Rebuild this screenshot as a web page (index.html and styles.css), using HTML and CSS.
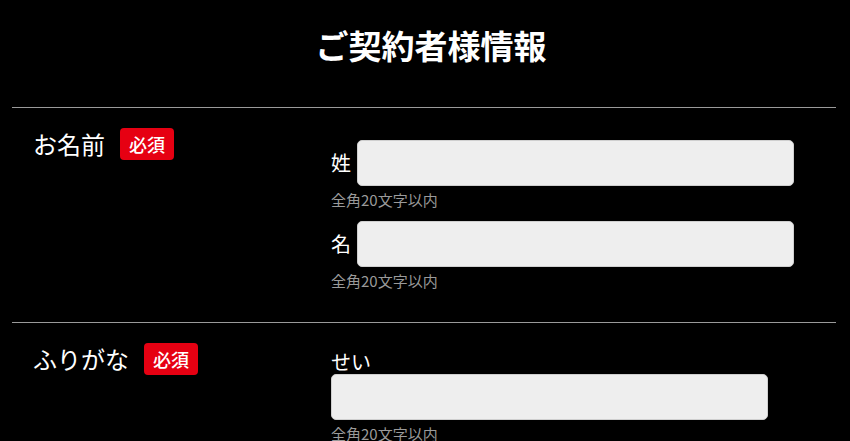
FILE: index.html
```html
<!DOCTYPE html>
<html lang="ja">
<head>
<meta charset="utf-8">
<title>ご契約者様情報</title>
<link rel="stylesheet" href="styles.css">
</head>
<body>
<div class="page">
  <h1 class="title">ご契約者様情報</h1>
  <div class="form-row">
    <div class="row-head">
      <span class="row-label">お名前</span>
      <span class="badge">必須</span>
    </div>
    <div class="row-body">
      <div class="field">
        <div class="field-line">
          <span class="field-label">姓</span>
          <input class="text-input" type="text">
        </div>
        <div class="hint">全角20文字以内</div>
      </div>
      <div class="field">
        <div class="field-line">
          <span class="field-label">名</span>
          <input class="text-input" type="text">
        </div>
        <div class="hint">全角20文字以内</div>
      </div>
    </div>
  </div>
  <div class="form-row">
    <div class="row-head">
      <span class="row-label">ふりがな</span>
      <span class="badge">必須</span>
    </div>
    <div class="row-body stacked">
      <div class="field">
        <div class="field-label top-label">せい</div>
        <input class="text-input" type="text">
        <div class="hint">全角20文字以内</div>
      </div>
    </div>
  </div>
</div>
</body>
</html>
```

FILE: styles.css
```css
* { box-sizing: border-box; }
html, body {
  margin: 0;
  padding: 0;
  background: #000;
  color: #fff;
  font-family: "Noto Sans CJK JP", "Noto Sans", sans-serif;
}
.page {
  margin: 0 14px 0 12px;
}
.title {
  margin: 0 0 43px;
  padding: 26px 0 0 14px;
  font-size: 33px;
  line-height: 38px;
  font-weight: 700;
  text-align: center;
}
.form-row {
  display: flex;
  border-top: 1px solid #9a9a9a;
  padding: 20px 21px 31px;
}
.row-head {
  width: 298px;
  flex: none;
  display: flex;
  align-items: center;
  align-self: flex-start;
  gap: 15px;
}
.row-label {
  font-size: 24px;
  line-height: 32px;
}
.badge {
  display: inline-block;
  background: #e60012;
  color: #fff;
  font-size: 18px;
  font-weight: 500;
  line-height: 32px;
  height: 32px;
  padding: 0 9px;
  border-radius: 4px;
}
.row-body {
  padding-top: 12px;
  display: flex;
  flex-direction: column;
  gap: 11px;
}
.row-body.stacked {
  padding-top: 7px;
}
.field-line {
  display: flex;
  align-items: center;
  gap: 6px;
}
.field-label {
  font-size: 20px;
  line-height: 24px;
}
.text-input {
  width: 437px;
  height: 46px;
  background: #eeeeee;
  border: 1px solid #cfcfcf;
  border-radius: 5px;
  margin: 0;
  padding: 0 10px;
  font: inherit;
}
.hint {
  margin-top: 3px;
  font-size: 15px;
  line-height: 21px;
  color: #9a9a9a;
}
```
